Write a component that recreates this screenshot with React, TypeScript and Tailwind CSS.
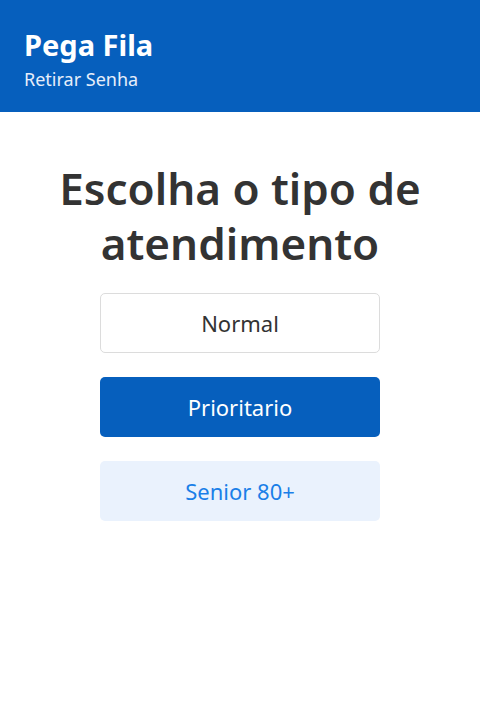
export default function App() {
  return (
    <div className="min-h-[728px] bg-white" style={{ fontFamily: '"Noto Sans", "Open Sans", sans-serif' }}>
      <header className="bg-[#065fbd] h-[112px] px-6 pt-[27px] flex flex-col text-white">
        <h1 className="text-[29px] font-bold leading-[36px]">Pega Fila</h1>
        <p className="text-[18px] leading-[24px] mt-[4px] text-[#e6eefa]">Retirar Senha</p>
      </header>
      <main className="flex flex-col items-center pt-[49px]">
        <h2 className="text-[44px] font-semibold leading-[55px] text-[#333333] text-center px-6">
          Escolha o tipo de atendimento
        </h2>
        <div className="flex flex-col gap-6 mt-[22px] w-[280px]">
          <button className="h-[60px] rounded-[5px] border border-[#dcdcdc] bg-white text-[22px] text-[#333333]">
            Normal
          </button>
          <button className="h-[60px] rounded-[5px] bg-[#065fbd] text-[22px] text-white">
            Prioritario
          </button>
          <button className="h-[60px] rounded-[5px] bg-[#eaf2fd] text-[22px] text-[#1a7fe8]">
            Senior 80+
          </button>
        </div>
      </main>
    </div>
  );
}
